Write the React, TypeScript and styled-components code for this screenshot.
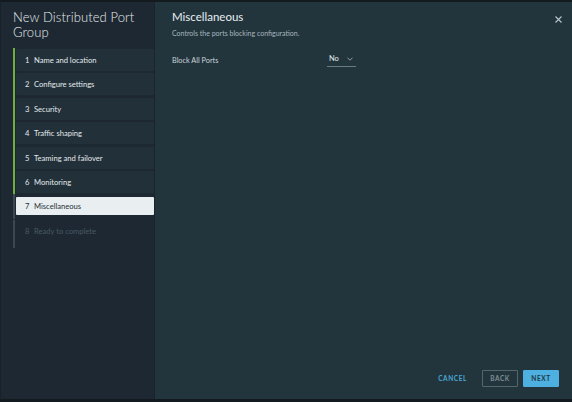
import React from 'react';
import styled, {createGlobalStyle} from "styled-components";

const GlobalStyle = createGlobalStyle`
	html, body {
		margin: 0;
		padding: 0;
		background: #141d24;
	}
	body {
		font-family: "Lato", "Liberation Sans", sans-serif;
	}
`

const Frame = styled.div`
	width: 572px;
	height: 402px;
	box-sizing: border-box;
	border-top: 2px solid #131b21;
	border-bottom: 3px solid #131b21;
	border-left: 1px solid #17212a;
	display: flex;
	overflow: hidden;
`

const Sidebar = styled.aside`
	width: 154px;
	background-color: #1d2832;
	border-right: 1px solid #1a242c;
	display: flex;
	flex-direction: column;
	padding: 8px 0 0 12px;
	box-sizing: border-box;
`

const Title = styled.h2`
	margin: 0 0 10px 0;
	font-size: 13px;
	line-height: 14.5px;
	font-weight: 300;
	color: #e6ecef;
	letter-spacing: 0.1px;
`

const Steps = styled.ol`
	list-style: none;
	margin: 0;
	padding: 0;
	display: flex;
	flex-direction: column;
	gap: 2.4px;
`

interface IStep {
	state: 'done' | 'active' | 'todo'
	last?: boolean
}

const Step = styled.li<IStep>`
	position: relative;
	display: flex;
	align-items: center;
	height: 22px;
	padding-left: 3px;
	font-size: 7.6px;
	color: ${props => props.state === 'todo' ? "#4a5962" : props.state === 'active' ? "#26333b" : "#e2e9ec"};

	&::before {
		content: "";
		position: absolute;
		left: 0;
		top: ${props => props.last ? "0" : "-1px"};
		bottom: ${props => props.last ? "-6px" : "-2px"};
		width: 2px;
		background-color: ${props => props.state === 'done' ? "#6fae3c" : "#3b4850"};
	}
`

const StepBody = styled.div<IStep>`
	flex: 1;
	height: ${props => props.state === 'active' ? "18px" : "22px"};
	display: flex;
	align-items: center;
	padding-left: 9px;
	background-color: ${props => props.state === 'active' ? "#e9eef0" : props.state === 'done' ? "#223039" : "transparent"};
	border-radius: 1px;
`

const StepNum = styled.span`
	width: 9px;
`

const Main = styled.main`
	flex: 1;
	background-color: #22353d;
	display: flex;
	flex-direction: column;
	padding: 7px 13px 12px 17px;
	box-sizing: border-box;
`

const Header = styled.div`
	display: flex;
	justify-content: space-between;
	align-items: flex-start;
`

const Heading = styled.h3`
	margin: 0;
	font-size: 11.5px;
	line-height: 16px;
	font-weight: 400;
	color: #e8eef1;
`

const Close = styled.button`
	border: none;
	background: none;
	padding: 0;
	margin: 7px -3px 0 0;
	cursor: pointer;
	display: flex;
`

const Subtitle = styled.p`
	margin: 4px 0 0 0;
	font-size: 7px;
	color: #a7b6bd;
`

const FieldRow = styled.div`
	display: flex;
	align-items: center;
	margin-top: 15px;
`

const Label = styled.span`
	width: 155px;
	font-size: 7.3px;
	color: #c9d3d8;
	padding-top: 1px;
`

const Select = styled.div`
	display: flex;
	align-items: center;
	gap: 8px;
	padding: 2px 3px 3px 2px;
	border-bottom: 1px solid #6b7b83;
	font-size: 7.5px;
	color: #e4ebee;
`

const Spacer = styled.div`
	flex: 1;
`

const Footer = styled.div`
	display: flex;
	justify-content: flex-end;
	align-items: center;
	gap: 5px;
`

interface IButton {
	variant: 'link' | 'outline' | 'primary'
}

const Button = styled.button<IButton>`
	height: 17px;
	min-width: ${props => props.variant === 'link' ? "auto" : "36px"};
	padding: 0 ${props => props.variant === 'link' ? "9px" : "6px"};
	font-family: inherit;
	font-size: 6.5px;
	font-weight: 700;
	letter-spacing: 0.6px;
	border-radius: 1px;
	cursor: pointer;
	color: ${props => props.variant === 'primary' ? "#1d3643" : props.variant === 'link' ? "#4aa7d4" : "#7f8e95"};
	background-color: ${props => props.variant === 'primary' ? "#4db0e0" : "transparent"};
	border: 1px solid ${props => props.variant === 'outline' ? "#55656c" : props.variant === 'primary' ? "#4db0e0" : "transparent"};
`

const steps = [
	'Name and location',
	'Configure settings',
	'Security',
	'Traffic shaping',
	'Teaming and failover',
	'Monitoring',
	'Miscellaneous',
	'Ready to complete',
]

const App: React.FC = () => {
	const current = 6

	return (
		<>
			<GlobalStyle/>
			<Frame>
				<Sidebar>
					<Title>New Distributed Port<br/>Group</Title>
					<Steps>
						{steps.map((name, i) => {
							const state = i < current ? 'done' : i === current ? 'active' : 'todo'
							return (
								<Step key={name} state={state} last={i === steps.length - 1}>
									<StepBody state={state}>
										<StepNum>{i + 1}</StepNum>
										{name}
									</StepBody>
								</Step>
							)
						})}
					</Steps>
				</Sidebar>
				<Main>
					<Header>
						<Heading>Miscellaneous</Heading>
						<Close aria-label="close">
							<svg width="7" height="7" viewBox="0 0 7 7">
								<path d="M0.5 0.5 L6.5 6.5 M6.5 0.5 L0.5 6.5" stroke="#b9c6cc" strokeWidth="1.1"/>
							</svg>
						</Close>
					</Header>
					<Subtitle>Controls the ports blocking configuration.</Subtitle>
					<FieldRow>
						<Label>Block All Ports</Label>
						<Select>
							No
							<svg width="6" height="4" viewBox="0 0 6 4">
								<path d="M0.5 0.8 L3 3.2 L5.5 0.8" stroke="#9aa9b0" strokeWidth="0.9" fill="none"/>
							</svg>
						</Select>
					</FieldRow>
					<Spacer/>
					<Footer>
						<Button variant="link">CANCEL</Button>
						<Button variant="outline">BACK</Button>
						<Button variant="primary">NEXT</Button>
					</Footer>
				</Main>
			</Frame>
		</>
	);
}

export default App;
